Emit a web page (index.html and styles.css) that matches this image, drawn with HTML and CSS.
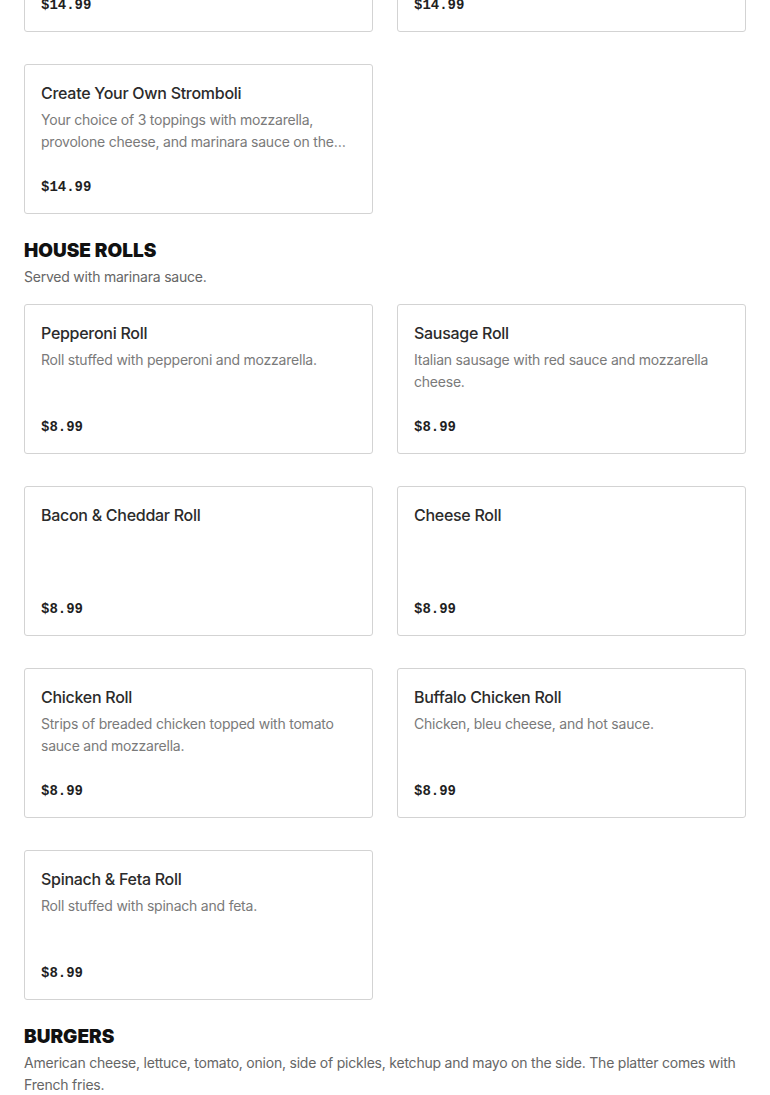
FILE: index.html
```html
<!DOCTYPE html>
<html>
<head>
<meta charset="utf-8">
<link rel="stylesheet" href="styles.css">
</head>
<body>
<main class="menu">
  <div class="grid">
    <div class="card"><div class="title">Meat Lovers Stromboli</div><div class="desc">Pepperoni, sausage, ham and bacon with mozzarella.</div><div class="price">$14.99</div></div>
    <div class="card"><div class="title">Veggie Stromboli</div><div class="desc">Peppers, onions, mushrooms and olives with mozzarella.</div><div class="price">$14.99</div></div>
    <div class="card"><div class="title">Create Your Own Stromboli</div><div class="desc">Your choice of 3 toppings with mozzarella, provolone cheese, and marinara sauce on the side.</div><div class="price">$14.99</div></div>
  </div>

  <section class="section">
    <h2 class="section-title">HOUSE ROLLS</h2>
    <p class="section-desc">Served with marinara sauce.</p>
    <div class="grid">
      <div class="card"><div class="title">Pepperoni Roll</div><div class="desc">Roll stuffed with pepperoni and mozzarella.</div><div class="price">$8.99</div></div>
      <div class="card"><div class="title">Sausage Roll</div><div class="desc">Italian sausage with red sauce and mozzarella cheese.</div><div class="price">$8.99</div></div>
      <div class="card"><div class="title">Bacon &amp; Cheddar Roll</div><div class="price">$8.99</div></div>
      <div class="card"><div class="title">Cheese Roll</div><div class="price">$8.99</div></div>
      <div class="card"><div class="title">Chicken Roll</div><div class="desc">Strips of breaded chicken topped with tomato sauce and mozzarella.</div><div class="price">$8.99</div></div>
      <div class="card"><div class="title">Buffalo Chicken Roll</div><div class="desc">Chicken, bleu cheese, and hot sauce.</div><div class="price">$8.99</div></div>
      <div class="card"><div class="title">Spinach &amp; Feta Roll</div><div class="desc">Roll stuffed with spinach and feta.</div><div class="price">$8.99</div></div>
    </div>
  </section>

  <section class="section">
    <h2 class="section-title">BURGERS</h2>
    <p class="section-desc">American cheese, lettuce, tomato, onion, side of pickles, ketchup and mayo on the side. The platter comes with French fries.</p>
  </section>
</main>
</body>
</html>
```
FILE: styles.css
```css
html, body {
  margin: 0;
  padding: 0;
  background: #ffffff;
}
.menu {
  margin-top: -118px;
  padding: 0 24px;
  font-family: Inter, "Noto Sans", sans-serif;
}
.grid {
  display: grid;
  grid-template-columns: 1fr 1fr;
  column-gap: 24px;
  row-gap: 32px;
}
.card {
  box-sizing: border-box;
  height: 150px;
  border: 1px solid #d3d3d3;
  border-radius: 3px;
  padding: 16px 16px 16px;
  display: flex;
  flex-direction: column;
}
.title {
  font-size: 16px;
  line-height: 24px;
  font-weight: 500;
  letter-spacing: -0.28px;
  color: #2b2b2b;
}
.desc {
  margin-top: 4px;
  font-size: 14px;
  line-height: 22px;
  letter-spacing: -0.22px;
  color: #7a7a7a;
  display: -webkit-box;
  -webkit-line-clamp: 2;
  -webkit-box-orient: vertical;
  overflow: hidden;
}
.price {
  margin-top: auto;
  font-family: "Liberation Mono", monospace;
  font-weight: 700;
  font-size: 14px;
  line-height: 20px;
  color: #1f1f1f;
}
.section-title {
  margin: 25px 0 3px;
  font-size: 19px;
  line-height: 24px;
  font-weight: 900;
  color: #111111;
  letter-spacing: 0;
}
.section-desc {
  margin: 0 0 16px;
  font-size: 14px;
  line-height: 22px;
  letter-spacing: -0.22px;
  color: #666666;
}
```
